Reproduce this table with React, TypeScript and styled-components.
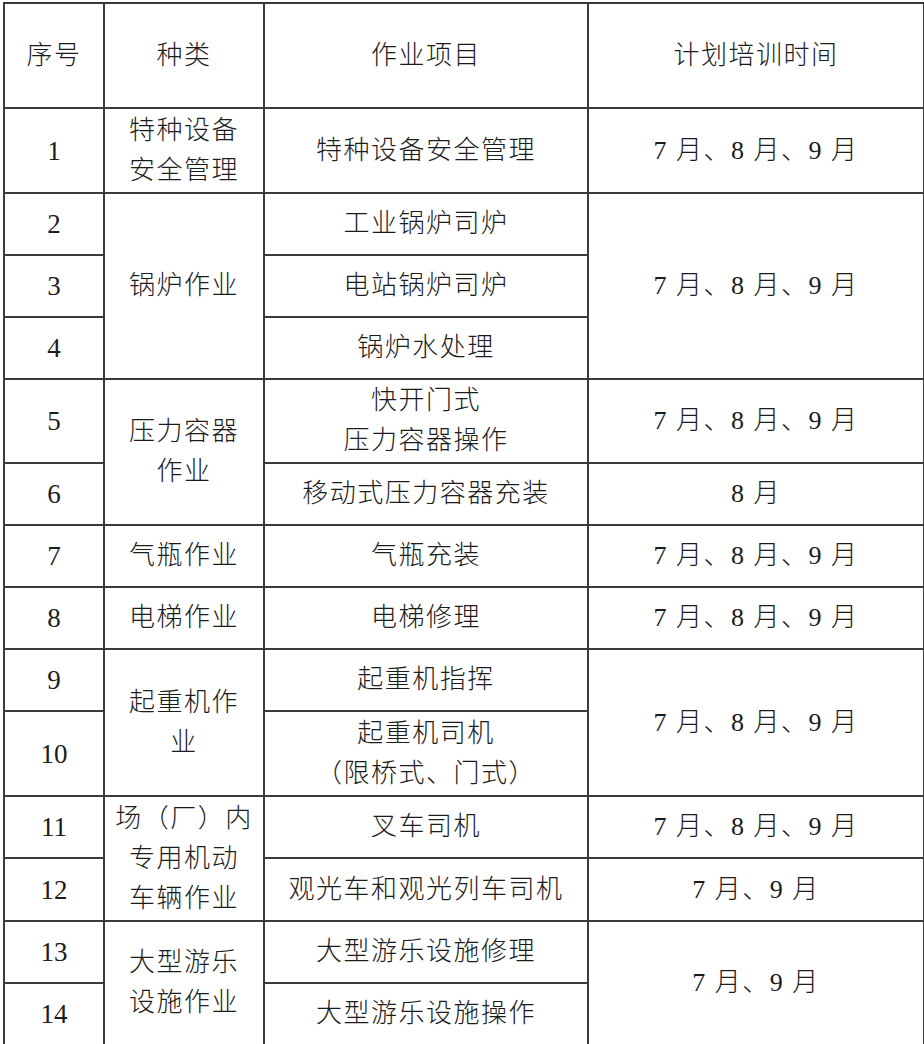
import styled, { createGlobalStyle } from "styled-components";

const GlobalStyle = createGlobalStyle`
  html, body {
    margin: 0;
    padding: 0;
    background: #ffffff;
  }
  body {
    font-family: "Liberation Serif", "Noto Sans CJK SC", serif;
    color: #1c1c1c;
  }
`;

const Sheet = styled.div`
  padding: 2px 0 0 3px;
  width: 924px;
  height: 1044px;
  overflow: hidden;
  box-sizing: border-box;
`;

const Table = styled.table`
  border-collapse: collapse;
  table-layout: fixed;
  width: 920px;
  font-size: 26px;
  letter-spacing: 1.5px;
`;

const Row = styled.tr<{ $h: number }>`
  height: ${(p) => p.$h}px;
`;

const Cell = styled.td`
  border: 2px solid #3a3a3a;
  padding: 0;
  text-align: center;
  vertical-align: middle;
  line-height: 40px;
  font-weight: 300;
`;

const HeadCell = styled(Cell).attrs({ as: "th" })`
  font-weight: 300;
`;

const NumCell = styled(Cell)`
  font-size: 27px;
  letter-spacing: 0;
`;

const Months = ({ list }: { list: number[] }) => (
  <>{list.map((m) => `${m} 月`).join("、")}</>
);

const ALL = [7, 8, 9];

export default function App() {
  return (
    <>
      <GlobalStyle />
      <Sheet>
        <Table>
          <colgroup>
            <col style={{ width: 100 }} />
            <col style={{ width: 160 }} />
            <col style={{ width: 324 }} />
            <col style={{ width: 336 }} />
          </colgroup>
          <thead>
            <Row $h={105}>
              <HeadCell>序号</HeadCell>
              <HeadCell>种类</HeadCell>
              <HeadCell>作业项目</HeadCell>
              <HeadCell>计划培训时间</HeadCell>
            </Row>
          </thead>
          <tbody>
            <Row $h={85}>
              <NumCell>1</NumCell>
              <Cell>特种设备<br />安全管理</Cell>
              <Cell>特种设备安全管理</Cell>
              <Cell><Months list={ALL} /></Cell>
            </Row>

            {/* 锅炉 */}
            <Row $h={62}>
              <NumCell>2</NumCell>
              <Cell rowSpan={3}>锅炉作业</Cell>
              <Cell>工业锅炉司炉</Cell>
              <Cell rowSpan={3}><Months list={ALL} /></Cell>
            </Row>
            <Row $h={62}>
              <NumCell>3</NumCell>
              <Cell>电站锅炉司炉</Cell>
            </Row>
            <Row $h={62}>
              <NumCell>4</NumCell>
              <Cell>锅炉水处理</Cell>
            </Row>

            {/* 压力容器 */}
            <Row $h={84}>
              <NumCell>5</NumCell>
              <Cell rowSpan={2}>压力容器<br />作业</Cell>
              <Cell>快开门式<br />压力容器操作</Cell>
              <Cell><Months list={ALL} /></Cell>
            </Row>
            <Row $h={62}>
              <NumCell>6</NumCell>
              <Cell>移动式压力容器充装</Cell>
              <Cell><Months list={[8]} /></Cell>
            </Row>

            <Row $h={62}>
              <NumCell>7</NumCell>
              <Cell>气瓶作业</Cell>
              <Cell>气瓶充装</Cell>
              <Cell><Months list={ALL} /></Cell>
            </Row>
            <Row $h={62}>
              <NumCell>8</NumCell>
              <Cell>电梯作业</Cell>
              <Cell>电梯修理</Cell>
              <Cell><Months list={ALL} /></Cell>
            </Row>

            {/* 起重机 */}
            <Row $h={62}>
              <NumCell>9</NumCell>
              <Cell rowSpan={2}>起重机作<br />业</Cell>
              <Cell>起重机指挥</Cell>
              <Cell rowSpan={2}><Months list={ALL} /></Cell>
            </Row>
            <Row $h={85}>
              <NumCell>10</NumCell>
              <Cell>起重机司机<br />（限桥式、门式）</Cell>
            </Row>

            {/* 场（厂）内 */}
            <Row $h={62}>
              <NumCell>11</NumCell>
              <Cell rowSpan={2}>场（厂）内<br />专用机动<br />车辆作业</Cell>
              <Cell>叉车司机</Cell>
              <Cell><Months list={ALL} /></Cell>
            </Row>
            <Row $h={63}>
              <NumCell>12</NumCell>
              <Cell>观光车和观光列车司机</Cell>
              <Cell><Months list={[7, 9]} /></Cell>
            </Row>

            {/* 大型游乐设施 */}
            <Row $h={62}>
              <NumCell>13</NumCell>
              <Cell rowSpan={2}>大型游乐<br />设施作业</Cell>
              <Cell>大型游乐设施修理</Cell>
              <Cell rowSpan={2}><Months list={[7, 9]} /></Cell>
            </Row>
            <Row $h={62}>
              <NumCell>14</NumCell>
              <Cell>大型游乐设施操作</Cell>
            </Row>
          </tbody>
        </Table>
      </Sheet>
    </>
  );
}
